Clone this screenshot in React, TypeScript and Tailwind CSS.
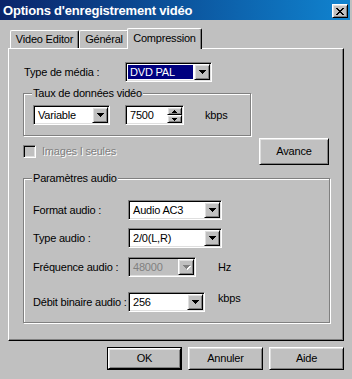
const raised =
  'border border-t-white border-l-white border-r-black border-b-black shadow-[inset_1px_1px_0_#dfdfdf,inset_-1px_-1px_0_#808080] bg-[#c0c0c0]'
const sunken =
  'border border-t-[#808080] border-l-[#808080] border-r-white border-b-white shadow-[inset_1px_1px_0_#000,inset_-1px_-1px_0_#dfdfdf]'
const etched = 'border border-[#808080] shadow-[inset_1px_1px_0_#fff,1px_1px_0_#fff]'

function DownArrow({ color = '#000' }: { color?: string }) {
  return (
    <svg width="7" height="4" shapeRendering="crispEdges" fill={color}>
      <path d="M0 0h7v1H0z M1 1h5v1H1z M2 2h3v1H2z M3 3h1v1H3z" />
    </svg>
  )
}

function Combo({
  className,
  value,
  selected,
  disabled,
}: {
  className: string
  value: string
  selected?: boolean
  disabled?: boolean
}) {
  return (
    <div className={`flex h-[20px] p-[1px] ${sunken} ${disabled ? 'bg-[#c0c0c0]' : 'bg-white'} ${className}`}>
      <div className="flex min-w-0 flex-1 items-center p-[1px]">
        <span
          className={`flex h-full flex-1 items-center pl-[2px] ${
            selected ? 'bg-[#000080] text-white' : disabled ? 'text-[#808080]' : ''
          }`}
        >
          {value}
        </span>
      </div>
      <div className={`flex w-[16px] items-center justify-center ${raised}`}>
        {disabled ? (
          <div className="drop-shadow-[1px_1px_0_#fff]">
            <DownArrow color="#808080" />
          </div>
        ) : (
          <DownArrow />
        )}
      </div>
    </div>
  )
}

function Spin({ value }: { value: string }) {
  return (
    <div className={`flex h-[20px] w-[59px] bg-white p-[1px] ${sunken}`}>
      <span className="flex flex-1 items-center pl-[3px]">{value}</span>
      <div className="flex w-[15px] flex-col">
        <div className={`flex flex-1 items-center justify-center ${raised}`}>
          <svg width="5" height="3" shapeRendering="crispEdges">
            <path d="M2 0h1v1H2z M1 1h3v1H1z M0 2h5v1H0z" />
          </svg>
        </div>
        <div className={`flex flex-1 items-center justify-center ${raised}`}>
          <svg width="5" height="3" shapeRendering="crispEdges">
            <path d="M0 0h5v1H0z M1 1h3v1H1z M2 2h1v1H2z" />
          </svg>
        </div>
      </div>
    </div>
  )
}

function Group({ title, className, children }: { title: string; className: string; children: React.ReactNode }) {
  return (
    <div className={`relative ${etched} ${className}`}>
      <span className="absolute -top-[7px] left-[8px] bg-[#c0c0c0] px-[1px]">{title}</span>
      {children}
    </div>
  )
}

function Button({ label, isDefault }: { label: string; isDefault?: boolean }) {
  if (isDefault) {
    return (
      <div className="h-[23px] w-[75px] border border-black">
        <div className={`flex h-full items-center justify-center ${raised}`}>{label}</div>
      </div>
    )
  }
  return <div className={`flex h-[23px] w-[75px] items-center justify-center ${raised}`}>{label}</div>
}

export default function App() {
  return (
    <div className="h-[379px] w-[352px] overflow-hidden bg-[#c0c0c0] font-['Liberation_Sans',Arial,sans-serif] text-[11px] leading-[13px] tracking-[-0.2px] text-black">
      {/* title bar */}
      <div className="flex h-[20px] w-[350px] items-center bg-linear-to-r from-[#0a246a] to-[#1084d0] pl-[3px] pr-[2px]">
        <span className="flex-1 text-[13px] font-bold tracking-[-0.2px] text-white">Options d'enregistrement vidéo</span>
        <div className={`mt-[2px] flex h-[14px] w-[16px] items-center justify-center ${raised}`}>
          <svg width="8" height="7" shapeRendering="crispEdges">
            <path d="M0 0h2v1H0z M6 0h2v1H6z M1 1h2v1H1z M5 1h2v1H5z M2 2h4v1H2z M3 3h2v1H3z M2 4h4v1H2z M1 5h2v1H1z M5 5h2v1H5z M0 6h2v1H0z M6 6h2v1H6z" />
          </svg>
        </div>
      </div>

      {/* tabs */}
      <div className="mt-[8px] flex h-[20px] items-end pl-[10px]">
        <div className="flex h-[18px] w-[69px] items-center justify-center rounded-t-[2px] border-l border-t border-r border-l-white border-t-white border-r-black shadow-[inset_-1px_0_0_#808080]">
          Video Editor
        </div>
        <div className="flex h-[18px] w-[50px] items-center justify-center rounded-t-[2px] border-l border-t border-r border-l-white border-t-white border-r-black shadow-[inset_-1px_0_0_#808080]">
          Général
        </div>
        <div className="relative z-10 -mb-[1px] -ml-[2px] flex h-[21px] w-[75px] items-start justify-center rounded-t-[2px] border-l border-t border-r border-l-white border-t-white border-r-black bg-[#c0c0c0] pt-[3px] shadow-[inset_-1px_0_0_#808080]">
          Compression
        </div>
      </div>

      {/* tab panel */}
      <div className="relative ml-[8px] h-[293px] w-[336px] border border-t-white border-l-white border-r-black border-b-black pl-[14px] pt-[13px] shadow-[inset_-1px_-1px_0_#808080]">
        <div className="flex h-[20px] items-center">
          <span className="w-[102px] pl-[1px]">Type de média :</span>
          <Combo className="w-[87px]" value="DVD PAL" selected />
        </div>

        <Group title="Taux de données vidéo" className="mt-[11px] h-[43px] w-[228px] pl-[9px] pt-[11px]">
          <div className="flex items-center">
            <Combo className="w-[77px]" value="Variable" />
            <div className="ml-[15px]">
              <Spin value="7500" />
            </div>
            <span className="ml-[21px]">kbps</span>
          </div>
        </Group>

        <div className="mt-[2px] flex h-[27px] w-[306px] items-center justify-between">
          <div className="flex items-center gap-[6px]">
            <div className={`h-[13px] w-[13px] bg-[#c0c0c0] ${sunken}`} />
            <span className="text-[#808080] [text-shadow:1px_1px_0_#fff]">Images I seules</span>
          </div>
          <div className={`flex h-[27px] w-[70px] items-center justify-center ${raised}`}>Avance</div>
        </div>

        <Group title="Paramètres audio" className="mt-[13px] h-[145px] w-[307px] pl-[9px] pt-[21px]">
          <div className="flex items-center">
            <span className="w-[95px]">Format audio :</span>
            <Combo className="w-[94px]" value="Audio AC3" />
          </div>
          <div className="mt-[8px] flex items-center">
            <span className="w-[95px]">Type audio :</span>
            <Combo className="w-[94px]" value="2/0(L,R)" />
          </div>
          <div className="mt-[9px] flex items-center">
            <span className="w-[95px]">Fréquence audio :</span>
            <Combo className="w-[68px]" value="48000" disabled />
            <span className="ml-[22px]">Hz</span>
          </div>
          <div className="mt-[15px] flex items-start">
            <span className="flex h-[20px] w-[95px] items-center whitespace-nowrap">Débit binaire audio :</span>
            <Combo className="w-[77px]" value="256" />
            <span className="ml-[13px]">kbps</span>
          </div>
        </Group>
      </div>

      {/* dialog buttons */}
      <div className="mt-[6px] flex justify-end gap-[6px] pr-[8px]">
        <Button label="OK" isDefault />
        <Button label="Annuler" />
        <Button label="Aide" />
      </div>
    </div>
  )
}
